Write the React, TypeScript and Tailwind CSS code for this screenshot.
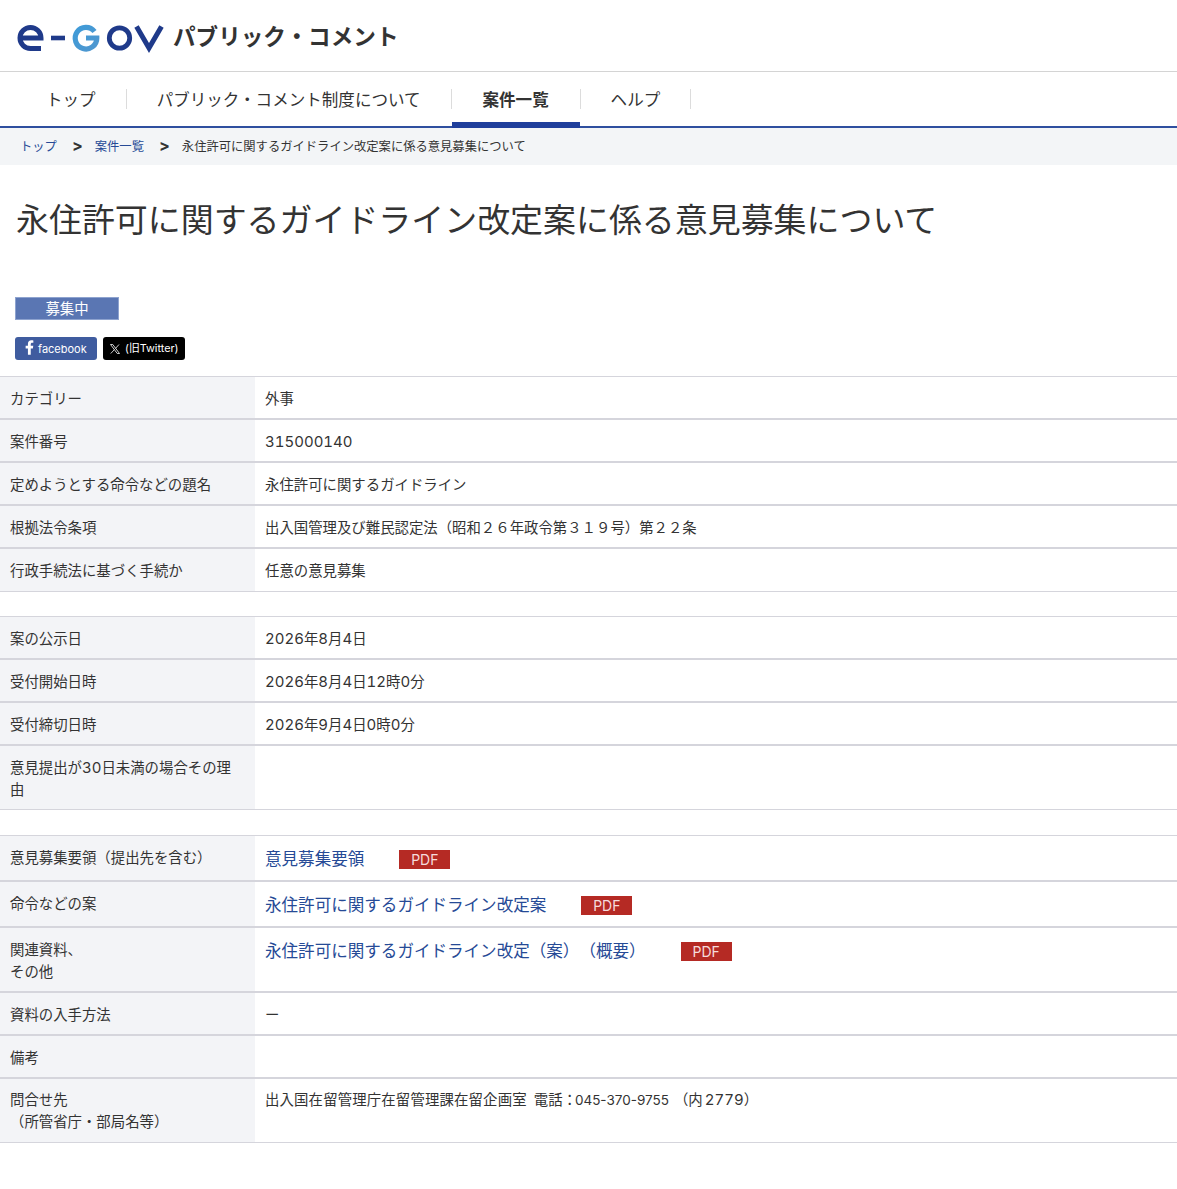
import React from "react";

const font = { fontFamily: 'Inter, "Noto Sans CJK JP", sans-serif' };

function Logo() {
  return (
    <svg width="148" height="30" viewBox="0 0 148 30" fill="none" aria-label="e-Gov" className="mt-[4px]">
      <defs>
        <linearGradient id="g" x1="0" y1="0" x2="1" y2="1">
          <stop offset="0" stopColor="#3f9bd8" />
          <stop offset="1" stopColor="#4f97cf" />
        </linearGradient>
      </defs>
      <path d="M4 15H25A10.5 10.5 0 0 0 4 15A10.5 10.5 0 0 0 14.5 25.5H25" stroke="#1f3a8a" strokeWidth="5" />
      <path d="M35 15H49" stroke="#1f3a8a" strokeWidth="4.6" />
      <path d="M78.5 8.5A10.8 10.8 0 1 0 80.8 15H70" stroke="url(#g)" strokeWidth="5.2" />
      <circle cx="103.5" cy="15" r="10.2" stroke="#1f3a8a" strokeWidth="4.8" />
      <path d="M120.5 3.5L133 25L145.5 3.5" stroke="#1f3a8a" strokeWidth="5" />
    </svg>
  );
}

function Sep() {
  return <span className="h-[20px] w-px bg-[#dcdcdc]" />;
}

function N({ children }: { children: React.ReactNode }) {
  return <span className="text-[15px] tabular-nums">{children}</span>;
}

type Row = { label: React.ReactNode; value?: React.ReactNode; h: string; pt?: string };

function Pdf() {
  return (
    <span className="ml-[35px] mt-[1px] inline-flex h-[19px] w-[51px] items-center justify-center bg-[#b52a24] text-[14px] leading-none text-[#f5dcdc]">
      PDF
    </span>
  );
}

function Doc({ text }: { text: string }) {
  return (
    <span className="flex items-center pt-[1px]">
      <a className="text-[16.56px] leading-[22px] text-[#264a96]">{text}</a>
      <Pdf />
    </span>
  );
}

function Table({ rows }: { rows: Row[] }) {
  return (
    <div className="border-t border-[#d5d5dc]">
      {rows.map((r, i) => (
        <div key={i} className={`flex border-b-2 border-[#d5d5dc] last:border-b ${r.h}`}>
          <div className={`w-[255px] shrink-0 bg-[#f3f4f7] pl-[10px] pr-[20px] text-[14.4px] leading-[22px] text-[#333] ${r.pt ?? "pt-[11px]"}`}>
            {r.label}
          </div>
          <div className={`flex-1 pl-[10px] text-[14.4px] leading-[22px] text-[#333] ${r.pt ?? "pt-[11px]"}`}>{r.value}</div>
        </div>
      ))}
    </div>
  );
}

export default function App() {
  const t1: Row[] = [
    { label: "カテゴリー", value: "外事", h: "h-[43px]" },
    { label: "案件番号", value: <N>315000140</N>, h: "h-[43px]" },
    { label: "定めようとする命令などの題名", value: "永住許可に関するガイドライン", h: "h-[43px]" },
    { label: "根拠法令条項", value: "出入国管理及び難民認定法（昭和２６年政令第３１９号）第２２条", h: "h-[43px]" },
    { label: "行政手続法に基づく手続か", value: "任意の意見募集", h: "h-[43px]" },
  ];
  const t2: Row[] = [
    { label: "案の公示日", value: <><N>2026</N>年<N>8</N>月<N>4</N>日</>, h: "h-[43px]" },
    { label: "受付開始日時", value: <><N>2026</N>年<N>8</N>月<N>4</N>日<N>12</N>時<N>0</N>分</>, h: "h-[43px]" },
    { label: "受付締切日時", value: <><N>2026</N>年<N>9</N>月<N>4</N>日<N>0</N>時<N>0</N>分</>, h: "h-[43px]" },
    { label: <>意見提出が<N>30</N>日未満の場合その理<br />由</>, value: "", h: "h-[64px]" },
  ];
  const t3: Row[] = [
    { label: "意見募集要領（提出先を含む）", value: <Doc text="意見募集要領" />, h: "h-[46px]" },
    { label: "命令などの案", value: <Doc text="永住許可に関するガイドライン改定案" />, h: "h-[46px]" },
    { label: <>関連資料、<br />その他</>, value: <Doc text="永住許可に関するガイドライン改定（案）（概要）" />, h: "h-[65px]" },
    { label: "資料の入手方法", value: "ー", h: "h-[43px]" },
    { label: "備考", value: "", h: "h-[43px]" },
    {
      label: <>問合せ先<br />（所管省庁・部局名等）</>,
      value: (
        <>
          <span className="tracking-[0.15px]">出入国在留管理庁在留管理課在留企画室</span>
          <span className="ml-[7px]">電話：</span>
          <span className="-ml-[2px] text-[13.5px]">045-370-9755</span>
          <span className="ml-[5px]">（内</span>
          <span className="ml-[2px] text-[15px] tabular-nums">2779</span>）
        </>
      ),
      h: "h-[64px]",
      pt: "pt-[10px]",
    },
  ];

  return (
    <div className="h-[1189px] overflow-hidden bg-white text-[#333] [text-spacing-trim:space-all]" style={font}>
      <header className="flex h-[72px] items-center gap-[9px] border-b border-[#d4d4d4] pl-[16px]">
        <Logo />
        <span className="pt-[4px] text-[22.6px] font-bold leading-none text-[#333]">パブリック・コメント</span>
      </header>
      <nav className="flex h-[56px] items-center border-b-2 border-[#2f4f9f] pl-[16px]">
        <div className="flex h-full items-center">
          <span className="pl-[30px] pr-[30px] pt-[2px] text-[16.56px]">トップ</span>
          <Sep />
          <span className="pl-[30px] pr-[30px] pt-[2px] text-[16.56px]">パブリック・コメント制度について</span>
          <Sep />
          <span className="relative flex h-full w-[128px] items-center justify-center pt-[2px] text-[16.56px] font-bold">
            案件一覧
            <span className="absolute -bottom-[2px] left-0 right-0 h-[6px] bg-[#1f3f9c]" />
          </span>
          <Sep />
          <span className="pl-[30px] pr-[30px] pt-[2px] text-[16.56px]">ヘルプ</span>
          <Sep />
        </div>
      </nav>
      <div className="flex h-[37px] items-center bg-[#f3f5f7] pl-[20px] pt-[2px] text-[12.3px] text-[#333]">
        <a className="text-[#264a96]">トップ</a>
        <span className="ml-[15px] mr-[12px] pb-[6px] text-[16px] font-bold leading-none">&gt;</span>
        <a className="text-[#264a96]">案件一覧</a>
        <span className="ml-[15px] mr-[12px] pb-[6px] text-[16px] font-bold leading-none">&gt;</span>
        <span>永住許可に関するガイドライン改定案に係る意見募集について</span>
      </div>
      <h1 className="pb-[1px] pl-[16px] pt-[31px] text-[32.95px] font-normal leading-[48px] text-[#333]">
        永住許可に関するガイドライン改定案に係る意見募集について
      </h1>
      <div className="ml-[15px] mt-[52px] flex h-[23px] w-[104px] items-center justify-center border border-[#8ea3cf] bg-[#5a76b3] text-[14.4px] text-white">
        募集中
      </div>
      <div className="ml-[15px] mt-[17px] flex gap-[6px]">
        <a className="flex h-[23px] w-[82px] items-center rounded-[3px] bg-[#3f5c9f] pl-[10px] pt-[2px] text-[11px] text-white">
          <svg width="9" height="15" viewBox="0 0 320 512" fill="currentColor" className="-mt-[4px] mr-[4px]">
            <path d="M279.14 288l14.22-92.66h-88.91v-60.13c0-25.35 12.42-50.06 52.24-50.06h40.42V6.26S260.43 0 225.36 0c-73.22 0-121.08 44.38-121.08 124.72v70.62H22.89V288h81.39v224h100.17V288z" />
          </svg>
          facebook
        </a>
        <a className="flex h-[23px] w-[82px] items-center rounded-[3px] bg-black pl-[6px] pt-[2px] text-[10.8px] text-white">
          <svg width="12" height="12" viewBox="0 0 24 24" fill="none" stroke="currentColor" strokeWidth="1.6" className="-mt-[2px] mr-[4px]">
            <path d="M3 3h4.5L21 21h-4.5zM20 3l-7.2 8M11 13l-7.5 8" />
          </svg>
          (旧Twitter)
        </a>
      </div>
      <div className="mt-[16px]">
        <Table rows={t1} />
      </div>
      <div className="mt-[24px]">
        <Table rows={t2} />
      </div>
      <div className="mt-[25px]">
        <Table rows={t3} />
      </div>
    </div>
  );
}
